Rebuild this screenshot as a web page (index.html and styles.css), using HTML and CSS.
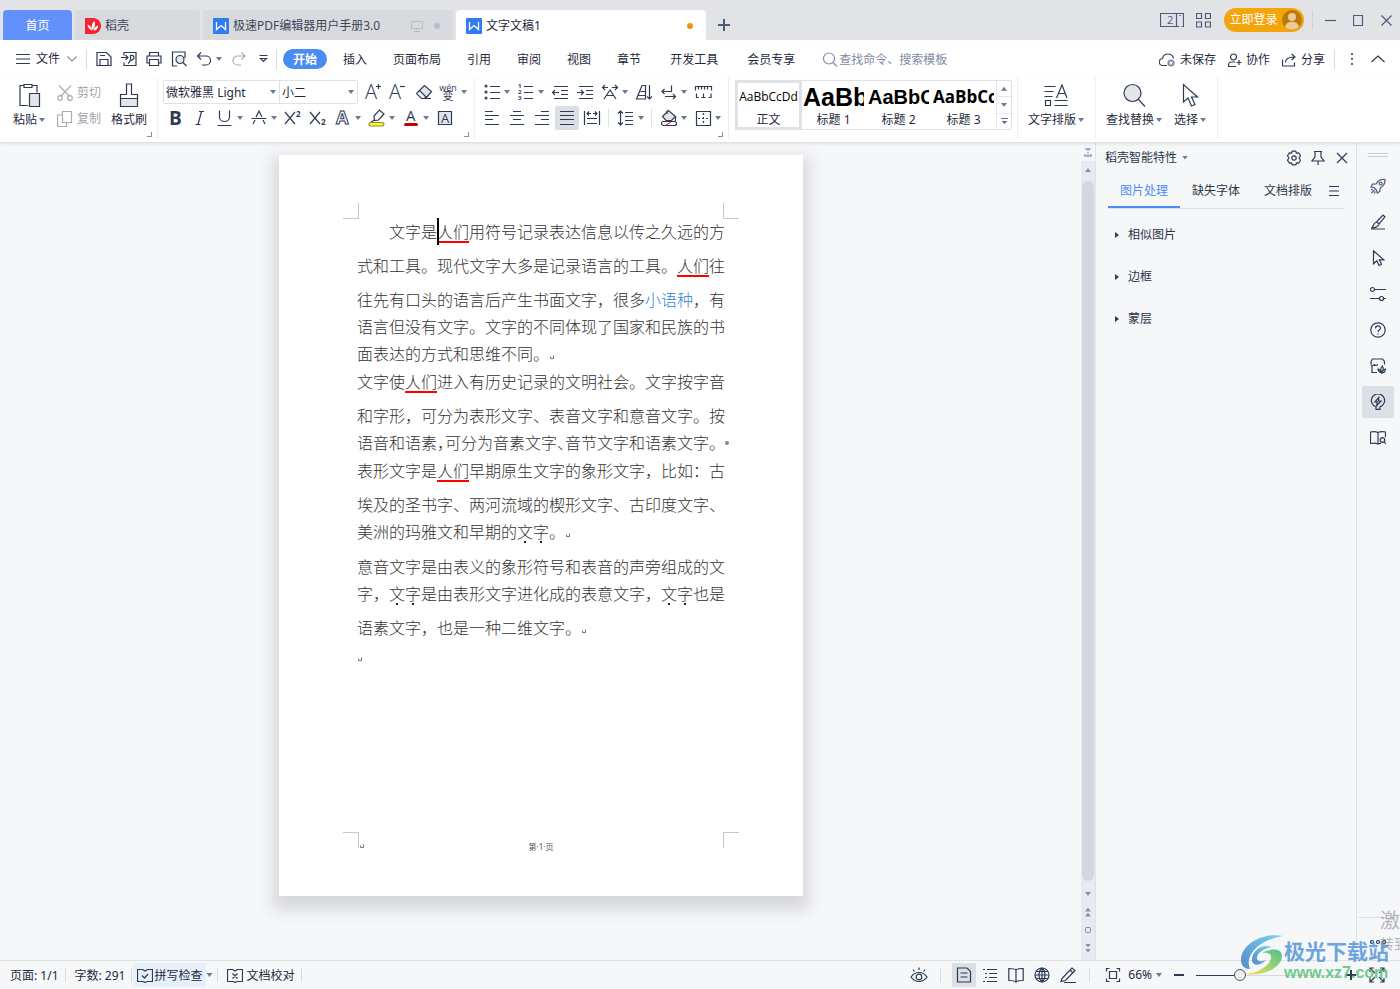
FILE: index.html
```html
<!DOCTYPE html>
<html lang="zh-CN">
<head>
<meta charset="utf-8">
<title>文字文稿1</title>
<link rel="stylesheet" href="styles.css">
</head>
<body>
<div class="app">

<header class="titlebar">
  <nav class="tabs" aria-label="文档标签">
    <button class="tab tab-home">首页</button>
    <button class="tab tab-docer"><svg width="16" height="16" viewBox="0 0 16 16"><path d="M0 0h8a8 8 0 1 1 0 16H0z" fill="#f5232f"/><path d="M7 12.500C4 11 2.500 9 2.500 6.500 5 7 6.500 9 7 12.500zM7.500 12C6 9 6.500 5.500 9.500 3c1.300 3.500.5 6.500-2 9zM8.500 12.800c.5-3 2-4.600 4.800-5.300-.2 3-2 5-4.800 5.300z" fill="#fff"/></svg><span>稻壳</span></button>
    <button class="tab tab-doc"><svg width="16" height="16" viewBox="0 0 16 16"><rect width="16" height="16" rx="1" fill="#2f7df0"/><path d="M3.500 4v7.500L8 7.500l4.500 4V4" fill="none" stroke="#fff" stroke-width="1.300"/></svg><span>极速PDF编辑器用户手册3.0</span><svg class="tab-screen" width="12" height="12" viewBox="0 0 12 12" fill="none" stroke="#b4bdd0"><path d="M.5 1.500h11v7H.5zM6 8.500v3M3 11.500h6"/></svg><i class="dot"></i></button>
    <button class="tab tab-doc tab-active"><svg width="16" height="16" viewBox="0 0 16 16"><rect width="16" height="16" rx="1" fill="#2f7df0"/><path d="M3.500 4v7.500L8 7.500l4.500 4V4" fill="none" stroke="#fff" stroke-width="1.300"/></svg><span>文字文稿1</span><i class="dot dot-unsaved"></i></button>
    <button class="tab-new" aria-label="新建标签"><svg width="12" height="12" viewBox="0 0 12 12" stroke="#4c5b76" stroke-width="2"><path d="M0 6h12M6 0v12"/></svg></button>
  </nav>
  <div class="window-tools">
    <button aria-label="窗口"><svg class="ic slate" width="24" height="14" viewBox="0 0 24 14"><path d="M16.500.5H.5v13h16zM16.500.5h7v13h-2M16.500 13.500h3M19.500 2.500h1.500"/><text x="7" y="11" class="num">2</text></svg></button>
    <button class="grid-btn" aria-label="应用"><svg class="ic slate" width="15" height="15" viewBox="0 0 15 15"><path d="M.5.5h5v5h-5zM9.500.5h5v5h-5zM.5 9h5v5h-5zM9.500 9h5v5h-5z"/></svg></button>
    <button class="login">立即登录<svg width="20" height="20" viewBox="0 0 20 20"><circle cx="10" cy="10" r="10" fill="#b87a08"/><circle cx="10" cy="7" r="4" fill="#e9cb93"/><path d="M3 17c1-7 13-7 14 0a10 10 0 0 1-14 0z" fill="#e9cb93"/></svg></button>
    <i class="vsep"></i>
    <button class="win" aria-label="最小化"><svg class="ic slate" width="11" height="11" viewBox="0 0 11 11"><path d="M0 5.500h11"/></svg></button>
    <button class="win" aria-label="最大化"><svg class="ic slate" width="11" height="11" viewBox="0 0 11 11"><path d="M.5.5h9v10h-9z"/></svg></button>
    <button class="win" aria-label="关闭"><svg class="ic slate" width="11" height="11" viewBox="0 0 11 11"><path d="M.5.5l10 10M10.500.5l-10 10"/></svg></button>
  </div>
</header>

<div class="menubar">
  <button class="file"><svg class="ic" width="14" height="12" viewBox="0 0 14 12"><path d="M0 1.500h14M0 6h14M0 10.500h14"/></svg><span>文件</span><svg class="ic grey" width="10" height="6" viewBox="0 0 10 6"><path d="M.5.5L5 5 9.500.5"/></svg></button>
  <i class="vsep"></i>
  <div class="quick">
    <button aria-label="保存"><svg class="ic" width="16" height="16" viewBox="0 0 16 16"><path d="M1 1.500h9.500L15 6v8.500H1zM4 14.500v-6h8v6M4 4.500h5"/></svg></button>
    <button aria-label="输出为PDF"><svg class="ic" width="16" height="16" viewBox="0 0 16 16"><path d="M3 4.500v-3h12v13H3v-3M0 6.500h6.500M4.500 4l2.500 2.500L4.500 9M7 12.500C9 11 10 8 9.500 4.500c4-1 5 3.500.5 5"/></svg></button>
    <button aria-label="打印"><svg class="ic" width="16" height="16" viewBox="0 0 16 16"><path d="M3.500 5V1.500h9V5M3.500 12H1V5h14v7h-2.500M3.500 8.500h9v6h-9z"/></svg></button>
    <button aria-label="打印预览"><svg class="ic" width="16" height="16" viewBox="0 0 16 16"><path d="M6 15H1.500V1H14v6"/><circle cx="9" cy="8.500" r="4" fill="#e3e5ea"/><path d="M12 11.500l3.500 3.500"/></svg></button>
    <button aria-label="撤销"><svg class="ic" width="16" height="16" viewBox="0 0 16 16"><path d="M5 1.500L1.500 5 5 8.500M1.500 5H10a4.500 4.500 0 0 1 0 9H6"/></svg></button>
    <i class="caret"></i>
    <button class="redo" aria-label="恢复"><svg class="ic light" width="16" height="16" viewBox="0 0 16 16"><path d="M10.500 1.500L14 5l-3.500 3.500M14 5H6.500a4.500 4.500 0 0 0 0 9H10"/></svg></button>
    <button class="more" aria-label="更多"><svg class="ic" width="9" height="8" viewBox="0 0 9 8"><path d="M.5.5h8M1.500 3.500l3 3 3-3z"/></svg></button>
  </div>
  <i class="vsep"></i>
  <nav class="menu">
    <button class="on">开始</button><button>插入</button><button>页面布局</button><button>引用</button><button>审阅</button><button>视图</button><button>章节</button><button class="wide">开发工具</button><button class="wide">会员专享</button>
  </nav>
  <label class="search"><svg class="ic grey" width="15" height="15" viewBox="0 0 15 15"><circle cx="6" cy="6.500" r="5.500"/><path d="M10 10.500l4 4"/></svg><input type="text" placeholder="查找命令、搜索模板" aria-label="查找命令"></label>
  <div class="share">
    <button><svg class="ic" width="17" height="14" viewBox="0 0 17 14"><path d="M8 12.500H4a3.500 3.500 0 0 1-.5-7C4 2.500 6.500 1 9 1c3 0 5 2 5.500 4.500"/><circle cx="12" cy="10" r="3.600" fill="#7f8da8" stroke="none"/><path d="M10.600 8.600l2.800 2.800M13.400 8.600l-2.800 2.800" stroke="#fff"/></svg>未保存</button>
    <button><svg class="ic" width="14" height="14" viewBox="0 0 14 14"><circle cx="5.500" cy="4" r="3"/><path d="M8 13.500H.5V12c0-2 1.500-3 3.500-3h3M11 7v5M8.500 9.500H13.500"/></svg>协作</button>
    <button><svg class="ic" width="15" height="14" viewBox="0 0 15 14"><path d="M.5 6.500V13h12V9.500M3.500 9.500c0-4 3-5.500 8.500-5.500M9.500 1L13 4 9.500 7"/></svg>分享</button>
  </div>
  <i class="vsep"></i>
  <button class="dots" aria-label="更多选项"><svg width="2" height="12" viewBox="0 0 2 12" fill="#5a6883"><path d="M0 0h2v2H0zM0 5h2v2H0zM0 10h2v2H0z"/></svg></button>
  <button class="fold" aria-label="收起功能区"><svg class="ic" width="14" height="8" viewBox="0 0 14 8"><path d="M.5 7L7 1l6.500 6"/></svg></button>
</div>

<div class="ribbon">
  <section class="group g-clip">
    <div class="cols">
      <button class="big"><svg class="ic" width="24" height="26" viewBox="0 0 24 26"><path d="M7 3.500H3v20h8M15 3.500h5v7M7 2.500h8v3H7z"/><path d="M12.500 11.500h10v13h-10z" fill="#e3e5ea"/></svg><span>粘贴<i class="caret"></i></span></button>
      <div class="rows clip-rows">
        <button class="small off"><svg class="ic light" width="16" height="16" viewBox="0 0 16 16"><path d="M2 .5l10.500 11M14 .5L3.500 11.500"/><circle cx="3" cy="13" r="2.300"/><circle cx="13" cy="13" r="2.300"/></svg>剪切</button>
        <button class="small off"><svg class="ic light" width="16" height="16" viewBox="0 0 16 16"><path d="M5.500.5h9v11h-9zM5.500 4H.5v11.500h9v-4"/></svg>复制</button>
      </div>
      <button class="big"><svg class="ic" width="20" height="26" viewBox="0 0 20 26"><path d="M1.500 16.500h17v8h-17z" fill="#e3e5ea"/><path d="M1.500 16.500v-4h6V2h5v10.500h6v4"/></svg><span>格式刷</span></button>
    </div>
    <i class="corner"></i>
  </section>

  <section class="group g-font">
    <div class="rows">
      <div class="row">
        <div class="picks"><select class="pick-font" aria-label="字体"><option>微软雅黑 Light</option></select><select class="pick-size" aria-label="字号"><option>小二</option></select></div>
        <button class="ib" aria-label="增大字号"><svg class="ic" width="22" height="24" viewBox="0 0 22 24"><text x="2" y="19" class="ga">A</text><path d="M13 6.500h5M15.500 4v5"/></svg></button>
        <button class="ib" aria-label="减小字号"><svg class="ic" width="22" height="24" viewBox="0 0 22 24"><text x="1" y="19" class="ga">A</text><path d="M12 6.500h5"/></svg></button>
        <button class="ib" aria-label="清除格式"><svg class="ic" width="22" height="24" viewBox="0 0 22 24"><path d="M6.500 10.500l5-5 7 6-5 6z" fill="#e3e5ea"/><path d="M6.500 10.500l-3 3 5 5h3l2-2M8.500 18.500H18"/></svg></button>
        <button class="ib" aria-label="拼音指南"><svg class="ic" width="22" height="24" viewBox="0 0 22 24"><text x="10" y="11" class="wen">wén</text><text x="10" y="20" class="bian">变</text></svg><i class="caret"></i></button>
      </div>
      <div class="row row-font">
        <button class="ib" aria-label="加粗"><svg class="ic" width="22" height="24" viewBox="0 0 22 24"><text x="5" y="19" class="gb">B</text></svg></button>
        <button class="ib" aria-label="倾斜"><svg class="ic" width="22" height="24" viewBox="0 0 22 24"><path d="M10 5.500h5M12.500 5.500L9 18.500M6.500 18.500h5"/></svg></button>
        <button class="ib" aria-label="下划线"><svg class="ic" width="22" height="24" viewBox="0 0 22 24"><path d="M5.500 4.500v6.500c0 6 10 6 10 0V4.500M3.500 19.500h14"/></svg><i class="caret"></i></button>
        <button class="ib" aria-label="删除线"><svg class="ic" width="22" height="24" viewBox="0 0 22 24"><path d="M8 11l3-6 3 6M5 18l2-4M17 18l-2-4M3.500 12.500h15"/></svg><i class="caret"></i></button>
        <button class="ib" aria-label="上标"><svg class="ic" width="22" height="24" viewBox="0 0 22 24"><path d="M3 6l10 12M13 6L3 18"/><text x="14" y="11" class="idx">2</text></svg></button>
        <button class="ib" aria-label="下标"><svg class="ic" width="22" height="24" viewBox="0 0 22 24"><path d="M3 6l10 12M13 6L3 18"/><text x="14" y="19" class="idx">2</text></svg></button>
        <button class="ib" aria-label="文字效果"><svg class="ic" width="22" height="24" viewBox="0 0 22 24"><text x="4" y="18" class="go">A</text></svg><i class="caret"></i></button>
        <button class="ib" aria-label="突出显示"><svg class="ic" width="22" height="24" viewBox="0 0 22 24"><path d="M8 10l5.500-6 4.500 4-5.500 6-4 .5zM8.500 14L5 16"/><rect x="3" y="16.500" width="15" height="3.500" rx="1.700" fill="#ff0" stroke="#8a8a6a"/></svg><i class="caret"></i></button>
        <button class="ib" aria-label="字体颜色"><svg class="ic" width="22" height="24" viewBox="0 0 22 24"><text x="6" y="15" class="gc">A</text><rect x="4" y="17" width="14" height="3" rx="1.500" fill="#c00000" stroke="none"/></svg><i class="caret"></i></button>
        <button class="ib" aria-label="字符底纹"><svg class="ic" width="22" height="24" viewBox="0 0 22 24"><path d="M4.500 5.500h13v13h-13z" fill="#e3e5ea"/><text x="7" y="17" class="gd">A</text></svg></button>
      </div>
    </div>
    <i class="corner"></i>
  </section>

  <section class="group g-para">
    <div class="rows">
      <div class="row">
        <button class="ib" aria-label="项目符号"><svg class="ic" width="22" height="24" viewBox="0 0 22 24"><circle cx="5" cy="6" r="1"/><circle cx="5" cy="12" r="1"/><circle cx="5" cy="18" r="1"/><path d="M9 6.500h10M9 12.500h10M9 18.500h10"/></svg><i class="caret"></i></button>
        <button class="ib" aria-label="编号"><svg class="ic" width="22" height="24" viewBox="0 0 22 24"><text x="3" y="8" class="tiny">1</text><text x="3" y="14" class="tiny">2</text><text x="3" y="20" class="tiny">3</text><path d="M9 6.500h9M9 12.500h9M9 18.500h9"/></svg><i class="caret"></i></button>
        <button class="ib" aria-label="减少缩进"><svg class="ic" width="22" height="24" viewBox="0 0 22 24"><path d="M5 6.500h14M12 10.500h7M12 14.500h7M5 18.500h14M3.500 12.500H10M6 10l-2.500 2.500L6 15"/></svg></button>
        <button class="ib" aria-label="增加缩进"><svg class="ic" width="22" height="24" viewBox="0 0 22 24"><path d="M5 6.500h14M12 10.500h7M12 14.500h7M5 18.500h14M3 12.500h6.500M7 10l2.500 2.500L7 15"/></svg></button>
        <button class="ib" aria-label="中文版式"><svg class="ic" width="22" height="24" viewBox="0 0 22 24"><path d="M3.500 7.500H9M6 5L3.500 7.500 6 10M13 7.500h5.500M16 5l2.500 2.500L16 10M5 19l6-9 6 9M7.500 15.500h7"/></svg><i class="caret"></i></button>
        <button class="ib" aria-label="排序"><svg class="ic" width="22" height="24" viewBox="0 0 22 24"><path d="M3.500 19L9 5.500h3.500V19zM7.500 11.500h5M5.500 15.500h7M16.500 5v14M14 16.500l2.500 2.500 2.500-2.500"/></svg></button>
        <button class="ib" aria-label="显示段落标记"><svg class="ic" width="22" height="24" viewBox="0 0 22 24"><path d="M13.500 5.500v6H4M6.500 9L4 11.500 6.500 14M7 16.500h10.500M15 14l2.500 2.500L15 19"/></svg><i class="caret"></i></button>
        <button class="ib" aria-label="制表位"><svg class="ic" width="22" height="24" viewBox="0 0 22 24"><path d="M3.500 10.500v-4h16v4M6.500 7v2.500M9.500 7v2.500M12.500 7v2.500M15.500 7v2.500M4.500 13.500v4h2.500M11.500 13.500v4M9.500 17.500h4M19 13.500v4h-2.500"/></svg></button>
      </div>
      <div class="row">
        <button class="ib" aria-label="左对齐"><svg class="ic" width="22" height="24" viewBox="0 0 22 24"><path d="M4 5.500h8M4 9.500h14M4 13.500h8M4 18.500h14"/></svg></button>
        <button class="ib" aria-label="居中"><svg class="ic" width="22" height="24" viewBox="0 0 22 24"><path d="M7 5.500h8M4 9.500h14M7 13.500h8M4 18.500h14"/></svg></button>
        <button class="ib" aria-label="右对齐"><svg class="ic" width="22" height="24" viewBox="0 0 22 24"><path d="M10 5.500h8M4 9.500h14M10 13.500h8M4 18.500h14"/></svg></button>
        <button class="ib active" aria-label="两端对齐"><svg class="ic" width="24" height="24" viewBox="-1 0 24 24"><path d="M4 5.500h14M4 9.500h14M4 13.500h14M4 18.500h14"/></svg></button>
        <button class="ib" aria-label="分散对齐"><svg class="ic" width="22" height="24" viewBox="0 0 22 24"><path d="M3.500 5v14M18.500 5v14M6 7.500h4M8 5.500l-2 2 2 2M16 7.500h-4M14 5.500l2 2-2 2M6 12.500h10M6 17.500h10"/></svg></button>
        <i class="rsep"></i>
        <button class="ib" aria-label="行距"><svg class="ic" width="22" height="24" viewBox="0 0 22 24"><path d="M5.500 5v14M3 7.500L5.500 5 8 7.500M3 16.500L5.500 19 8 16.500M10 6.500h8M10 10.500h8M10 14.500h8M10 18.500h8"/></svg><i class="caret"></i></button>
        <i class="rsep"></i>
        <button class="ib" aria-label="底纹颜色"><svg class="ic" width="22" height="24" viewBox="0 0 22 24"><path d="M4.500 10.500l6-6 7 6-4 4H8z" fill="#e3e5ea"/><path d="M9 8V4.500M17.500 11v4"/><rect x="3.500" y="15.500" width="15" height="4" rx="2" fill="#fff"/><path d="M8 19l5-3" stroke="#e04040"/></svg><i class="caret"></i></button>
        <button class="ib" aria-label="边框"><svg class="ic" width="22" height="24" viewBox="0 0 22 24"><path d="M4.500 5.500h14v14h-14z"/><path d="M11.500 7v11M6 12.500h11" stroke-dasharray="2 2"/></svg><i class="caret"></i></button>
      </div>
    </div>
    <i class="corner"></i>
  </section>

  <section class="group g-style">
    <div class="gallery">
      <button class="style chosen"><b class="s0">AaBbCcDd</b><span>正文</span></button>
      <button class="style"><b class="s1">AaBb</b><span>标题 1</span></button>
      <button class="style"><b class="s2">AaBbC</b><span>标题 2</span></button>
      <button class="style"><b class="s3">AaBbCc</b><span>标题 3</span></button>
      <div class="scroller"><button aria-label="上一行"><i class="caret up"></i></button><button aria-label="下一行"><i class="caret"></i></button><button aria-label="展开"><svg width="7" height="6" viewBox="0 0 7 6"><path d="M0 0h7v1H0zM.5 3h6l-3 3z" fill="#5f6d8c"/></svg></button></div>
    </div>
  </section>
  <section class="group g-type">
    <button class="big"><svg class="ic" width="24" height="26" viewBox="0 0 24 26"><path d="M.5 4.500h11M.5 9.500h9M.5 14.500h8M1.500 18.500h5v5h-5zM10.500 18.500h13M10.500 23.500h13M12.500 16l5.500-13 5 13M14.500 11.500h7"/></svg><span>文字排版<i class="caret"></i></span></button>
  </section>
  <section class="group g-find">
    <button class="big"><svg class="ic" width="24" height="26" viewBox="0 0 24 26"><circle cx="10.500" cy="11" r="8.500" fill="#e3e5ea"/><path d="M16.500 17.500l6.500 7"/></svg><span>查找替换<i class="caret"></i></span></button>
    <button class="big"><svg class="ic" width="20" height="26" viewBox="0 0 20 26"><path d="M3.500 2.500v17.500l4.500-4 3.500 8 3.500-1.500-3.500-7.500h6z"/></svg><span>选择<i class="caret"></i></span></button>
  </section>
</div>

<main class="main">
  <div class="workspace">
    <article class="page">
      <div class="crops"><i class="crop tl"></i><i class="crop tr"></i></div>
      <div class="text">
        <p><span class="ln ind">文字是<span class="err caret-here">人们</span>用符号记录表达信息以传之久远的方</span><span class="ln tall">式和工具。现代文字大多是记录语言的工具。<span class="err">人们</span>往</span><span class="ln tall">往先有口头的语言后产生书面文字，很多<a href="#lang">小语种</a>，有</span><span class="ln">语言但没有文字。文字的不同体现了国家和民族的书</span><span class="ln">面表达的方式和思维不同。<svg class="mark" width="6" height="5" viewBox="0 0 6 5"><path d="M1.500 1.500v2h3v-3"/></svg></span></p>
        <p><span class="ln">文字使<span class="err">人们</span>进入有历史记录的文明社会。文字按字音</span><span class="ln tall">和字形，可分为表形文字、表音文字和意音文字。按</span><span class="ln half">语音和语素，可分为音素文字、音节文字和语素文字。<i class="tab-mark"></i></span></p>
        <p><span class="ln">表形文字是<span class="err">人们</span>早期原生文字的象形文字，比如：古</span><span class="ln tall">埃及的圣书字、两河流域的楔形文字、古印度文字、</span><span class="ln">美洲的玛雅文和早期的<em>文</em><em>字</em>。<svg class="mark" width="6" height="5" viewBox="0 0 6 5"><path d="M1.500 1.500v2h3v-3"/></svg></span></p>
        <p><span class="ln tall">意音文字是由表义的象形符号和表音的声旁组成的文</span><span class="ln">字，<em>文</em><em>字</em>是由表形文字进化成的表意文字，<em>文</em><em>字</em>也是</span><span class="ln tall">语素文字，也是一种二维文字。<svg class="mark" width="6" height="5" viewBox="0 0 6 5"><path d="M1.500 1.500v2h3v-3"/></svg></span></p>
        <p><span class="ln"><svg class="mark first" width="6" height="5" viewBox="0 0 6 5"><path d="M1.500 1.500v2h3v-3"/></svg></span></p>
      </div>
      <footer class="foot">
        <i class="crop bl"></i><svg class="mark" width="6" height="5" viewBox="0 0 6 5"><path d="M1.500 1.500v2h3v-3"/></svg><span>第·1·页</span><i class="crop br"></i>
      </footer>
    </article>
  </div>

  <div class="scroll">
    <button class="ruler" aria-label="标尺"><svg width="8" height="9" viewBox="0 0 8 9" fill="#a8b2c8"><path d="M1 0h6v1L5 3H3L1 1zM3 4h2v1H3zM0 6h2v1h1V6h2v1h1V6h2v3H0z"/></svg></button>
    <button aria-label="向上"><i class="caret up"></i></button>
    <i class="thumb"></i>
    <button aria-label="向下"><i class="caret"></i></button>
    <button aria-label="上一页"><i class="caret up"></i><i class="caret up"></i></button>
    <button aria-label="选择浏览对象"><svg width="6" height="6" viewBox="0 0 6 6"><rect x=".5" y=".5" width="5" height="5" rx="1" fill="none" stroke="#7f8ba6"/></svg></button>
    <button aria-label="下一页"><i class="caret"></i><i class="caret"></i></button>
  </div>

  <aside class="panel">
    <div class="panel-head">
      <button class="panel-title">稻壳智能特性<i class="caret"></i></button>
      <button aria-label="设置"><svg class="ic" width="16" height="16" viewBox="0 0 16 16"><path d="M6.200 1.200h3.600l.7 2 2.100-.4 1.900 3-1.400 2.200 1.400 2.200-1.900 3-2.100-.4-.7 2H6.200l-.7-2-2.100.4-1.900-3L2.900 8 1.500 5.800l1.900-3 2.100.4z" stroke-linejoin="round"/><circle cx="8" cy="8" r="2.200"/></svg></button>
      <button aria-label="固定"><svg class="ic" width="16" height="16" viewBox="0 0 16 16"><path d="M4 1.500h8M5 1.500v5.500l-3 4h12l-3-4V1.500M8 11v4"/></svg></button>
      <button aria-label="关闭面板"><svg class="ic" width="16" height="16" viewBox="0 0 16 16"><path d="M3 3l10 10M13 3L3 13"/></svg></button>
    </div>
    <div class="panel-tabs">
      <button class="on">图片处理</button><button>缺失字体</button><button>文档排版</button>
      <button class="list" aria-label="列表"><svg class="ic" width="10" height="10" viewBox="0 0 10 10"><path d="M0 .5h10M0 5h10M0 9.500h10"/></svg></button>
    </div>
    <button class="fold-item"><i class="tri"></i>相似图片</button>
    <button class="fold-item"><i class="tri"></i>边框</button>
    <button class="fold-item"><i class="tri"></i>蒙层</button>
  </aside>

  <aside class="rail">
    <i class="grip"></i>
    <button aria-label="推荐"><svg class="ic slate" width="16" height="16" viewBox="0 0 16 16"><path d="M15 1.500c-4-.7-7 1-9 4.500l-3.500.2L1 9l3 .5L6.500 12l.8 3 2.500-1.500.4-3.500C13.500 8 15.300 5.500 15 1.500zM1 12l2-1M1.500 15l3-3M4 15.500l1.500-2"/><circle cx="10.500" cy="5.500" r="1.500"/></svg></button>
    <button aria-label="样式"><svg class="ic" width="16" height="16" viewBox="0 0 16 16"><path d="M6.500 8L13 1l2 1.800L9 9.800M6.500 8L9 9.800C8.500 12 7 13.500 1.500 14 4 12.500 3 9 6.500 8zM1 15h14"/></svg></button>
    <button aria-label="选择"><svg class="ic" width="16" height="16" viewBox="0 0 16 16"><path d="M3.500.8v13l3.300-3 2.200 4.700 2.500-1.200-2.200-4.500h4.500z"/></svg></button>
    <button aria-label="属性"><svg class="ic" width="16" height="16" viewBox="0 0 16 16"><circle cx="2.500" cy="3.500" r="2"/><path d="M4.500 3.500H16M0 12.500h9.500M13.500 12.500H16"/><circle cx="11.500" cy="12.500" r="2"/></svg></button>
    <button aria-label="帮助"><svg class="ic" width="16" height="16" viewBox="0 0 16 16"><circle cx="8" cy="8" r="7.200"/><path d="M5.500 6.500c0-3.500 5-3.300 5-.5 0 2-2.500 2-2.500 4M8 11.200v1.300"/></svg></button>
    <button aria-label="素材"><svg class="ic" width="16" height="16" viewBox="0 0 16 16"><path d="M7 14.500H2V8M1 3.500L2.500 1h10L14.500 3.500V6.500M1 3.500V6c0 2 3.500 2 3.500 0 0 2 3 2 3 0"/><path d="M11.500 15c-2.500-1-3.500-2-3.500-4 1.500.3 3 1.500 3.500 4zM11.500 15c-1.500-3-.8-5 .8-7 1.200 2 1.200 5-.8 7zM11.500 15c.5-2.500 2-3.500 3.800-4 0 2.500-1.500 4-3.800 4z"/></svg></button>
    <button class="active" aria-label="智能特性"><svg class="ic" width="16" height="16" viewBox="0 0 16 16"><path d="M6 12.800A6.600 6.600 0 1 1 10 12.800V15.300H6z"/><path d="M8.800 3.500L5 7.800h2.200l-.5 3.700L11 7H8.500z"/></svg></button>
    <button aria-label="文档查找"><svg class="ic" width="16" height="16" viewBox="0 0 16 16"><path d="M8 2.500C6 1.500 3 1.500.5 2v11.500c3-.5 5.500-.5 7.500.5 1-.4 2-.6 3-.7M8 2.500v11.500M8 2.500c2-1 5-1 7.500-.5v5"/><circle cx="12.500" cy="10" r="2.300"/><path d="M14 11.800l2 2"/></svg></button>
    <div class="rail-end"><button aria-label="更多"><svg class="ic" width="16" height="6" viewBox="0 0 16 6"><circle cx="2" cy="3" r="1.500"/><circle cx="8" cy="3" r="1.500"/><circle cx="14" cy="3" r="1.500"/></svg></button></div>
  </aside>
</main>

<footer class="status">
  <button class="st">页面: 1/1</button><i class="vsep"></i>
  <button class="st">字数: 291</button><i class="vsep"></i>
  <button class="st spell"><svg class="ic" width="16" height="14" viewBox="0 0 16 14"><path d="M5.500.5H.5v12H6l2 1 2-1h5.500V.5h-5M5.500.5L8 2 10.500.5M5 6.500L7.500 9 11 5"/></svg>拼写检查</button><i class="caret"></i><i class="vsep"></i>
  <button class="st proof"><svg class="ic" width="16" height="14" viewBox="0 0 16 14"><path d="M5.500.5H.5v12H6l2 1 2-1h5.500V.5h-5M5.500.5L8 2 10.500.5M5.500 4.500l5 5M10.500 4.500l-5 5"/></svg>文档校对</button><i class="vsep"></i>
  <div class="views">
    <button aria-label="护眼模式"><svg class="ic" width="18" height="16" viewBox="0 0 18 16"><path d="M1 10c4-6 12-6 16 0-4 6-12 6-16 0zM9 .5v2.500M3 2.500l1.500 2M15 2.500l-1.500 2"/><circle cx="9" cy="10" r="2.800"/></svg></button>
    <i class="vsep"></i>
    <button class="active" aria-label="页面视图"><svg class="ic" width="16" height="16" viewBox="0 0 16 16"><path d="M1.500 1h9.500l3.500 3.500V15h-13zM4.500 6h7M4.500 10h7"/></svg></button>
    <button aria-label="大纲"><svg class="ic" width="16" height="16" viewBox="0 0 16 16"><path d="M1 2.500h2M5 2.500h10M3 6.500h2M7 6.500h8M3 10.500h2M7 10.500h8M1 14.500h2M5 14.500h10"/></svg></button>
    <button aria-label="阅读版式"><svg class="ic" width="16" height="16" viewBox="0 0 16 16"><path d="M8 3C6.500 1.500 3.500 1.500.8 1.500v12c2.700 0 5.700 0 7.200 1.500 1.500-1.500 4.500-1.500 7.200-1.500v-12C12.500 1.500 9.500 1.500 8 3zM8 3v12"/></svg></button>
    <button aria-label="Web版式"><svg class="ic" width="16" height="16" viewBox="0 0 16 16"><circle cx="8" cy="8" r="7"/><path d="M1 8h14M2 4.500h12M2 11.500h12M8 1v14M8 1C4 4 4 12 8 15M8 1c4 3 4 11 0 14"/></svg></button>
    <button aria-label="写作模式"><svg class="ic" width="16" height="16" viewBox="0 0 16 16"><path d="M2 11.500L12 1l3 2.500L5.500 13.500 1 14.500zM10 3l3 3M4 15.500h12"/></svg></button>
    <i class="vsep"></i>
    <button aria-label="适合页宽"><svg class="ic" width="16" height="16" viewBox="0 0 16 16"><path d="M1.500 4.500v-3h3M11.500 1.500h3v3M14.500 11.500v3h-3M4.500 14.500h-3v-3M4.500 4.500h7v7h-7z"/></svg></button>
  </div>
  <button class="pct">66%<i class="caret"></i></button>
  <button class="minus" aria-label="缩小"><svg width="10" height="2" viewBox="0 0 10 2"><path d="M0 0h10v2H0z" fill="#2d3b54"/></svg></button>
  <input class="zoom" type="range" min="0" max="100" value="28" aria-label="缩放">
  <button class="plus" aria-label="放大"><svg width="10" height="10" viewBox="0 0 10 10"><path d="M0 4h10v2H0zM4 0h2v10H4z" fill="#2d3b54"/></svg></button>
  <button class="full" aria-label="全屏"><svg class="ic" width="16" height="16" viewBox="0 0 16 16"><path d="M1 5V1h4M1 1l5 5M11 1h4v4M15 1l-5 5M15 11v4h-4M15 15l-5-5M5 15H1v-4M1 15l5-5"/></svg></button>
</footer>

<div class="activate"><b>激活</b><span>转到</span></div>
<div class="brand">
  <svg width="46" height="42" viewBox="0 0 46 42">
    <defs>
      <linearGradient id="bl" x1="0" y1="1" x2="1" y2="0"><stop offset="0" stop-color="#3c78c4"/><stop offset="1" stop-color="#62cdf2"/></linearGradient>
      <linearGradient id="gr" x1="0" y1="1" x2="1" y2="0"><stop offset="0" stop-color="#f2e24a"/><stop offset=".5" stop-color="#8ccf5a"/><stop offset="1" stop-color="#35b27a"/></linearGradient>
    </defs>
    <path d="M43 2C24-2 1 10 1 26c0 6 4 9 9 9C5 24 14 7 43 2z" fill="url(#bl)"/>
    <path d="M32 13C21 9 11 18 12 27c1 5 9 5 14-1-4 2-9 2-9-2 0-5 6-9 15-11z" fill="url(#bl)"/>
    <path d="M22 19c8-5 20-5 20 3 0 11-18 21-37 18 13-1 24-8 26-15 1-5-3-7-9-6z" fill="url(#gr)"/>
  </svg>
  <div><b>极光下载站</b><span>www.xz7.com</span></div>
</div>
</div>
</body>
</html>
```
FILE: styles.css
```css
* { box-sizing: border-box; }
html, body { height: 100%; }
body {
  margin: 0;
  overflow: hidden;
  font: 12px/16px "Noto Sans", "Noto Sans CJK SC", sans-serif;
  color: #1f2a3d;
  background: #f6f7f9;
}
button {
  display: flex;
  align-items: center;
  justify-content: center;
  flex: none;
  padding: 0;
  border: 0;
  background: none;
  font: inherit;
  color: inherit;
  white-space: nowrap;
}
svg { flex: none; display: block; }
.app { position: relative; display: flex; flex-direction: column; height: 100vh; overflow: hidden; }

.ic { fill: none; stroke: #2d3b54; stroke-width: 1.2; }
.ic.slate { stroke: #4c5b7a; }
.ic.grey { stroke: #8490a8; }
.ic.light { stroke: #a9acb2; }
.ic text { stroke: none; fill: #2d3b54; font-family: "Open Sans", sans-serif; }
.ic .num { font-size: 11px; fill: #4c5b7a; }
.ic .ga { font-size: 20px; font-weight: 300; }
.ic .gb { font-size: 19px; font-weight: 700; }
.ic .go { font-size: 18px; font-weight: 700; fill: #fff; stroke: #2d3b54; stroke-width: 1; }
.ic .gc { font-size: 15px; }
.ic .gd { font-size: 13px; }
.ic .idx { font-size: 8px; font-weight: 700; }
.ic .tiny { font-size: 6px; font-weight: 700; }
.ic .wen { font-size: 9px; font-weight: 400; text-anchor: middle; }
.ic .bian { font-family: "Noto Sans CJK SC", sans-serif; font-size: 11px; text-anchor: middle; }

.caret {
  flex: none;
  width: 6px;
  height: 4px;
  background: #6c7996;
  clip-path: polygon(0 0, 100% 0, 50% 100%);
}
.caret.up { clip-path: polygon(50% 0, 100% 100%, 0 100%); }
.vsep { flex: none; width: 1px; height: 20px; background: #dadce2; }

/* title bar */
.titlebar { display: flex; justify-content: space-between; flex: none; height: 40px; background: #e1e3e7; }
.tabs { display: flex; align-items: flex-end; gap: 3px; padding-left: 3px; }
.tab {
  height: 30px;
  gap: 4px;
  justify-content: flex-start;
  padding: 2px 10px 0;
  border-radius: 4px 4px 0 0;
  background: #d8dade;
  color: #3d4759;
}
.tab-home { width: 69px; justify-content: center; background: #6391fb; color: #fff; }
.tab-docer { width: 125px; }
.tab-doc { width: 250px; }
.tab-active { background: #fff; color: #1f2a3d; }
.tab-screen { margin-left: auto; }
.dot { width: 6px; height: 6px; margin: 0 3px 0 7px; border-radius: 50%; background: #b4bdd0; }
.dot-unsaved { margin-left: auto; background: #e79a08; }
.tab-new { width: 30px; height: 30px; }
.window-tools { display: flex; align-items: center; height: 40px; padding-right: 8px; }
.grid-btn { margin: 0 13px 0 12px; }
.login { height: 24px; width: 80px; gap: 4px; padding-left: 3px; border-radius: 12px; background: #f4a50c; color: #fff; }
.window-tools .vsep { margin: 0 12px 0 8px; background: #cfd2d9; }
.win + .win { margin-left: 17px; }

/* menu bar */
.menubar { display: flex; align-items: center; flex: none; height: 38px; padding: 0 15px 0 16px; background: #fff; }
.file { gap: 6px; margin-right: 9px; }
.file svg:last-child { margin-left: 1px; }
.quick { display: flex; align-items: center; margin: 0 0 0 4px; }
.quick button { width: 25px; height: 24px; }
.quick .redo { margin-left: 4px; }
.menu { display: flex; gap: 6px; margin-left: 6px; }
.menu button { height: 20px; padding: 2px 10px 0; border-radius: 10px; }
.menu .on { background: #4a8cf3; color: #fff; font-weight: 700; }
.menu .wide { margin-left: 3px; }
.search { display: flex; align-items: center; flex: 1; gap: 1px; margin-left: 18px; min-width: 0; }
.search input { flex: 1; min-width: 0; padding: 1px 0 0; border: 0; outline: 0; background: none; font: inherit; }
.search input::placeholder { color: #7f8aa3; opacity: 1; }
.share { display: flex; gap: 12px; margin-right: 9px; padding-top: 1px; }
.share button { gap: 4px; }
.dots { margin-left: 16px; }
.fold { margin-left: 18px; }

/* ribbon */
.ribbon {
  position: relative;
  display: flex;
  flex: none;
  height: 65px;
  padding-bottom: 3px;
  background: #fff;
  border-bottom: 1px solid #e0e2e6;
  box-shadow: 0 1px 3px rgba(60, 70, 90, .12);
}
.group { display: flex; flex-direction: column; gap: 2px; padding: 2px 5px 0; border-right: 1px solid #eceef1; }
.cols { display: flex; padding-right: 5px; }
.rows { display: flex; flex-direction: column; gap: 2px; }
.row { display: flex; align-items: center; gap: 3px; height: 24px; }
.row-font { padding-left: 1px; }
.corner { width: 5px; height: 5px; align-self: flex-end; border: solid #8490a8; border-width: 0 1px 1px 0; }
.big { flex-direction: column; height: 50px; }
.big svg { margin: 2px 0; }
.big span { display: flex; align-items: center; gap: 2px; height: 20px; }
.small { gap: 4px; height: 24px; padding-top: 1px; }
.off { color: #a3a6ad; }
.g-clip { padding-left: 13px; }
.clip-rows { margin: 0 10px 0 12px; }
.ib { height: 24px; border-radius: 2px; }
.ib .caret { margin: 0 2px 0 1px; }
.ib.active { margin: 0 -1px; background: #dbdfe5; }
.picks { display: flex; margin-right: 2px; border: 1px solid #dfe1e6; border-radius: 2px; height: 24px; width: 195px; }
.picks select {
  appearance: none;
  min-width: 0;
  padding: 1px 2px 0;
  border: 0;
  font: inherit;
  color: inherit;
  background: #fff url("data:image/svg+xml,%3Csvg xmlns='http://www.w3.org/2000/svg' width='6' height='4'%3E%3Cpath d='M0 0h6L3 4z' fill='%236c7996'/%3E%3C/svg%3E") no-repeat right 3px center;
}
.pick-font { width: 115px; }
.picks .pick-size { width: 78px; border-left: 1px solid #dfe1e6; }
.g-para { padding-left: 6px; }
.rsep { width: 1px; height: 18px; margin: 0 3px 0 2px; background: #dfe1e6; }
.g-style { padding-left: 6px; }
.gallery { display: flex; width: 277px; height: 50px; border: 1px solid #dfe1e6; border-radius: 2px; }
.style { flex-direction: column; width: 65px; height: 48px; padding: 0 2px; }
.style b { display: flex; align-items: center; width: 61px; height: 30px; overflow: hidden; color: #000; }
.chosen { outline: 3px solid #dfe2e7; outline-offset: -2px; }
.style .s0 { font: 400 12px/24px "Open Sans", sans-serif; justify-content: center; }
.style .s1 { font: 700 25px/24px "Liberation Sans", sans-serif; }
.style .s2 { font: 700 20px/24px "Liberation Sans", sans-serif; }
.style .s3 { font: 700 17px/24px "Open Sans", sans-serif; }
.scroller { display: flex; flex-direction: column; flex: 1; border-left: 1px solid #e6e8ec; }
.scroller button { flex: 1; }
.scroller button + button { border-top: 1px solid #e6e8ec; }
.g-type { padding: 2px 11px 0 10px; }
.g-find { flex-direction: row; gap: 12px; padding: 2px 11px 0 10px; }

/* main area */
.main { display: flex; flex: 1; min-height: 0; }
.workspace { flex: 1; display: flex; justify-content: center; align-items: flex-start; padding: 12px 0 0 1px; overflow: hidden; }
.page {
  display: flex;
  flex-direction: column;
  width: 524px;
  min-height: 741px;
  background: #fff;
  box-shadow: 0 8px 14px 6px rgba(60, 64, 72, .17);
}
.crops { display: flex; justify-content: space-between; padding: 48px 64px 0; }
.crop { flex: none; width: 16px; height: 16px; border: 0 solid #c8c8c8; }
.tl { border-width: 0 1px 1px 0; }
.tr { border-width: 0 0 1px 1px; }
.bl { border-width: 1px 1px 0 0; }
.br { border-width: 1px 0 0 1px; margin-left: auto; }
.text {
  flex: 1;
  margin-top: -1px;
  padding: 0 70px 0 78px;
  font: 300 16px/27px "Noto Sans CJK SC", sans-serif;
  color: #333;
}
.text p { margin: 0 0 1px; }
.ln { display: flex; align-items: center; white-space: nowrap; height: 27px; }
.tall { height: 34px; padding-top: 7px; }
.ind { padding-left: 32px; }
.half { font-feature-settings: "halt"; }
.tab-mark { flex: none; width: 4px; height: 4px; margin-left: 8px; border-radius: 50%; background: #888; }
.text a { color: #2f7fd6; text-decoration: none; }
.err { text-decoration: underline 2px #f00; text-underline-offset: 3px; text-decoration-skip-ink: none; }
.caret-here { position: relative; }
.caret-here::before { content: ""; position: absolute; left: 0; top: 0; width: 2px; height: 27px; background: #000; }
.text em { position: relative; font-style: normal; }
.text em::after { content: ""; position: absolute; left: 7px; bottom: 2px; width: 2px; height: 2px; background: #222; }
.mark { fill: none; stroke: #777; stroke-width: 1; margin: 8px 0 0; }
.foot { display: flex; align-items: flex-start; height: 64px; padding: 0 64px; }
.foot .mark { margin: 12px -6px 0 0; }
.foot span { flex: 1; text-align: center; margin-top: 9px; font: 8px/12px "Noto Sans", "Noto Sans CJK SC", sans-serif; color: #555; }

.scroll { display: flex; flex-direction: column; flex: none; width: 14px; padding-bottom: 3px; background: #e9eaf0; }
.scroll button { flex-direction: column; gap: 1px; height: 18px; }
.scroll .ruler { background: #f6f7f9; }
.scroll .caret { background: #8491ac; }
.thumb { flex: 1; width: 12px; margin: 2px 1px 4px; border-radius: 6px; background: #d4d7e0; }

.panel { flex: none; width: 262px; padding: 0 12px; border: solid #e0e2e9; border-width: 0 1px; color: #2b3648; }
.panel-head { display: flex; align-items: center; gap: 8px; height: 29px; margin: 0 -6px 0 -3px; }
.panel-title { gap: 5px; margin-right: auto; }
.panel-tabs { display: flex; height: 37px; border-bottom: 1px solid #e0e2e9; margin-bottom: 5px; }
.panel-tabs button { width: 72px; padding-top: 3px; border-bottom: 2px solid transparent; }
.panel-tabs .on { color: #4a8cf3; border-color: #4a8cf3; }
.panel-tabs .list { width: 20px; }
.fold-item { gap: 9px; height: 42px; padding-left: 7px; }
.tri { width: 4px; height: 6px; background: #2d3b54; clip-path: polygon(0 0, 100% 50%, 0 100%); }

.rail { display: flex; flex-direction: column; align-items: center; flex: none; width: 43px; padding-right: 2px; gap: 4px; }
.grip { width: 20px; height: 4px; margin: 10px 0 9px; border: solid #cdd0d6; border-width: 1px 0; }
.rail button { width: 32px; height: 32px; border-radius: 2px; }
.rail .active, .views .active { background: #dbdfe6; }
.rail-end { margin-top: auto; height: 43px; width: 39px; padding-top: 8px; border-top: 1px solid #e0e2e9; display: flex; justify-content: center; }

/* status bar */
.status { display: flex; align-items: center; flex: none; height: 29px; border-top: 1px solid #e0e2e6; padding-right: 15px; }
.status .vsep { height: 14px; }
.st { height: 24px; gap: 3px; padding-top: 1px; }
.status > .st:first-child { margin-left: 10px; }
.status > .st + .vsep { margin: 0 9px 0 6px; }
.status > .spell { padding: 1px 4px 0; margin-left: -8px; gap: 1px; background: #e6f0fb; }
.status > .caret + .vsep { margin: 0 9px 0 5px; }
.views { display: flex; align-items: center; gap: 2px; margin-left: auto; }
.views button { width: 24px; height: 24px; }
.views .vsep { margin: 0 9px 0 7px; }
.pct { gap: 4px; margin: 0 12px 0 3px; }
.zoom { appearance: none; width: 146px; height: 14px; margin: 0 4px 0 12px; background: linear-gradient(90deg, #2d3b54 30%, #d5d8df 30%) no-repeat center / 100% 1px; }
.zoom::-webkit-slider-thumb { appearance: none; width: 12px; height: 12px; border: 1px solid #4c5566; border-radius: 50%; background: #efefef; }
.full { margin-left: 13px; }

/* overlays */
.activate { position: absolute; right: -20px; bottom: 36px; display: flex; flex-direction: column; width: 40px; color: rgba(110, 114, 120, .5); white-space: nowrap; }
.activate b { font: 400 20px/26px "Noto Sans CJK SC", sans-serif; }
.activate span { font: 14px/20px "Noto Sans CJK SC", sans-serif; }
.brand { position: absolute; right: 11px; bottom: 5px; display: flex; align-items: center; opacity: .85; pointer-events: none; }
.brand div { display: flex; flex-direction: column; }
.brand svg { margin: 0 -2px 8px 0; }
.brand b { font: 700 21px/28px "Noto Sans CJK SC", sans-serif; color: #5596d6; }
.brand span { font: 700 16px/18px "Liberation Sans", sans-serif; color: #5cc27c; }
```
